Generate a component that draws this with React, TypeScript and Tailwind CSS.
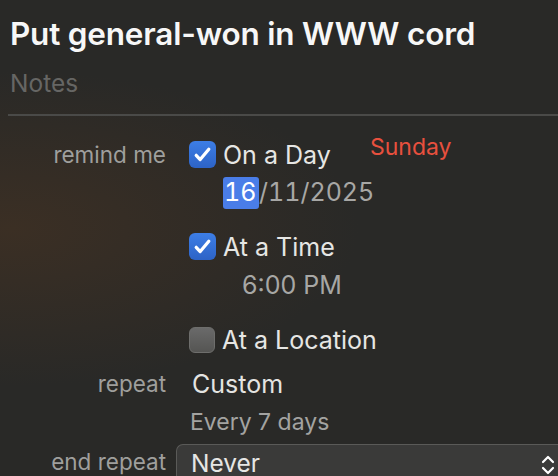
import React from 'react';

const Check = ({ checked }: { checked: boolean }) =>
  checked ? (
    <div className="w-[27px] h-[27px] rounded-[6px] bg-gradient-to-b from-[#3d7ee6] to-[#2d63c6] flex items-center justify-center shrink-0">
      <svg width="21" height="21" viewBox="0 0 20 20" fill="none">
        <path d="M4 10.8l3.8 4L16 5" stroke="white" strokeWidth="3.1" strokeLinecap="round" strokeLinejoin="round" />
      </svg>
    </div>
  ) : (
    <div className="w-[26px] h-[26px] rounded-[6px] bg-gradient-to-b from-[#6a6a6a] to-[#555553] border border-[#6e6e6c] shrink-0" />
  );

const Label = ({ children }: { children: React.ReactNode }) => (
  <div className="w-[166px] shrink-0 text-right text-[22.5px] leading-[28px] text-[#9f9f9d]">{children}</div>
);

export default function App() {
  return (
    <div
      className="w-[558px] h-[476px] overflow-hidden bg-[#292927] bg-[radial-gradient(ellipse_at_2%_48%,#3b2f24_0%,rgba(41,41,39,0)_45%)] text-white"
      style={{ fontFamily: 'Inter, "Noto Sans", sans-serif' }}
    >
      <div className="pl-[10px] pt-[14px]">
        <div className="text-[31.5px] font-semibold leading-[40px] text-[#f7f7f7] tracking-[-0.2px]">Put general-won in WWW cord</div>
        <div className="text-[24.5px] leading-[30px] mt-[14px] text-[#666664]">Notes</div>
      </div>
      <div className="ml-[8px] mt-[16px] h-[2px] bg-[#4a4a48]" />

      <div className="flex items-center mt-[25px] h-[27px]">
        <Label>remind me</Label>
        <div className="flex items-center ml-[23px] gap-[7px] relative">
          <Check checked />
          <span className="text-[25px] leading-[30px] text-[#e6e6e4]">On a Day</span>
          <span className="absolute left-[181px] -top-[7px] text-[23px] leading-[28px] text-[#e8503e]">Sunday</span>
        </div>
      </div>

      <div className="flex items-center mt-[9px] h-[32px] pl-[223px] text-[25px] text-[#a7a7a5] tabular-nums">
        <span className="bg-[#4a7de8] text-white h-[32px] w-[36px] flex items-center pl-[1px] rounded-[3px]">16</span>
        <span>/11/2025</span>
      </div>

      <div className="flex items-center mt-[24px] h-[27px] pl-[189px] gap-[7px]">
        <Check checked />
        <span className="text-[25px] leading-[30px] text-[#e6e6e4]">At a Time</span>
      </div>

      <div className="flex items-center mt-[12px] h-[28px] pl-[242px] text-[25px] text-[#a7a7a5]">6:00 PM</div>

      <div className="flex items-center mt-[27px] h-[26px] pl-[189px] gap-[7px]">
        <Check checked={false} />
        <span className="text-[25px] leading-[30px] text-[#e6e6e4]">At a Location</span>
      </div>

      <div className="flex items-center mt-[17px] h-[28px]">
        <Label>repeat</Label>
        <span className="ml-[26px] text-[25px] leading-[30px] text-[#e4e4e2]">Custom</span>
      </div>

      <div className="flex items-center mt-[12px] h-[24px] pl-[190px] text-[23px] text-[#a3a3a1]">Every 7 days</div>

      <div className="flex items-start mt-[10px]">
        <Label>
          <div className="pt-[4px]">end repeat</div>
        </Label>
        <div className="ml-[10px] flex-1 h-[40px] bg-[#3a3a39] border-t border-l border-[#5a5a58] rounded-tl-[7px] flex items-center pl-[14px] relative">
          <span className="text-[24.5px] leading-[30px] text-[#e6e6e4] -mt-[4px]">Never</span>
          <svg className="absolute right-[2px] top-[8px]" width="16" height="24" viewBox="0 0 16 24" fill="none">
            <path d="M3 9l5-5 5 5M3 15l5 5 5-5" stroke="white" strokeWidth="2.2" strokeLinecap="round" strokeLinejoin="round" />
          </svg>
        </div>
      </div>
    </div>
  );
}
